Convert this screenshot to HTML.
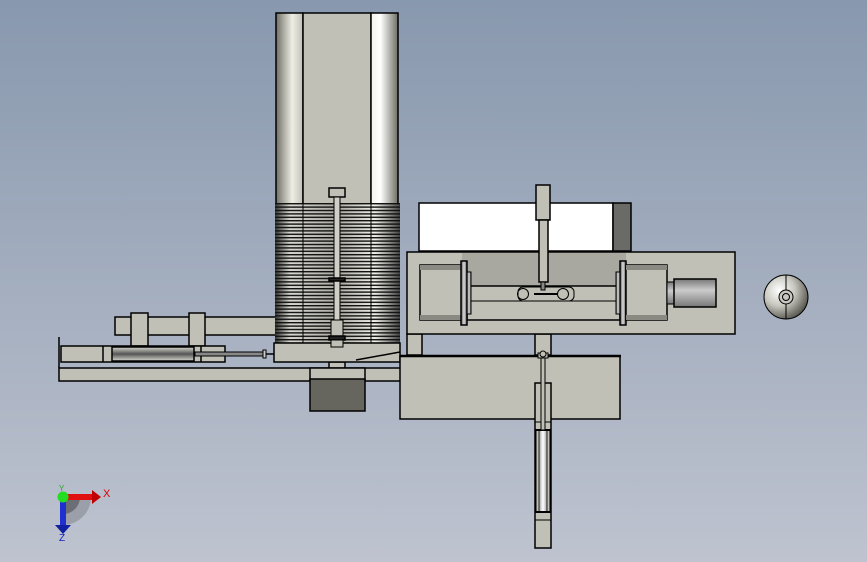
<!DOCTYPE html>
<html><head><meta charset="utf-8"><style>
html,body{margin:0;padding:0;width:867px;height:562px;overflow:hidden}
svg{display:block}
</style></head><body>
<svg width="867" height="562" viewBox="0 0 867 562" xmlns="http://www.w3.org/2000/svg">
<defs>
<linearGradient id="bg" x1="0" y1="0" x2="0" y2="1">
<stop offset="0" stop-color="#8898ae"/><stop offset="1" stop-color="#bec3cf"/></linearGradient>
<linearGradient id="cl" x1="0" x2="1"><stop offset="0" stop-color="#6f6f66"/><stop offset="0.6" stop-color="#eeeee4"/><stop offset="1" stop-color="#c0c0b6"/></linearGradient>
<linearGradient id="cr" x1="0" x2="1"><stop offset="0" stop-color="#f4f4ea"/><stop offset="0.35" stop-color="#ffffff"/><stop offset="1" stop-color="#6e6e64"/></linearGradient>
<linearGradient id="coil" x1="0" x2="1"><stop offset="0" stop-color="#333"/><stop offset="0.12" stop-color="#d8d8d0"/><stop offset="0.5" stop-color="#a8a8a0"/><stop offset="0.8" stop-color="#f0f0e8"/><stop offset="1" stop-color="#444"/></linearGradient>
<pattern id="lines" x="0" y="203" width="4" height="3.4" patternUnits="userSpaceOnUse"><rect width="4" height="1.4" fill="#111"/></pattern>
<linearGradient id="barrel" x1="0" y1="0" x2="0" y2="1"><stop offset="0" stop-color="#d8d8d0"/><stop offset="0.5" stop-color="#555"/><stop offset="1" stop-color="#d8d8d0"/></linearGradient>
<linearGradient id="vb" x1="0" x2="1"><stop offset="0" stop-color="#999"/><stop offset="0.3" stop-color="#ddd"/><stop offset="0.5" stop-color="#fff"/><stop offset="0.7" stop-color="#ddd"/><stop offset="1" stop-color="#999"/></linearGradient>
<linearGradient id="fl" x1="0" x2="1"><stop offset="0" stop-color="#555"/><stop offset="0.5" stop-color="#ddd"/><stop offset="1" stop-color="#555"/></linearGradient>
<linearGradient id="mt" x1="0" y1="0" x2="0" y2="1"><stop offset="0" stop-color="#777"/><stop offset="0.4" stop-color="#ccc"/><stop offset="1" stop-color="#777"/></linearGradient>
<radialGradient id="ball" cx="0.35" cy="0.35" r="0.7"><stop offset="0" stop-color="#fff"/><stop offset="0.5" stop-color="#c8c8c0"/><stop offset="1" stop-color="#55554e"/></radialGradient>
</defs>
<rect width="867" height="562" fill="url(#bg)"/>
<g stroke="#000" stroke-width="1.5">
<rect x="59" y="368" width="342" height="13" fill="#c0c0b6"/>
<line x1="59" y1="337" x2="59" y2="368"/>
<rect x="115" y="317" width="162" height="18" fill="#c0c0b6"/>
<rect x="131" y="313" width="17" height="33" fill="#c0c0b6"/>
<rect x="189" y="313" width="16" height="33" fill="#c0c0b6"/>
<rect x="61" y="346" width="164" height="16" fill="#c0c0b6"/>
<line x1="103" y1="346" x2="103" y2="362"/>
<rect x="112" y="347" width="82" height="14" fill="url(#barrel)"/>
<line x1="201" y1="346" x2="201" y2="362"/>
<rect x="195" y="352" width="68" height="4" fill="#888" stroke-width="1"/>
<rect x="263" y="350" width="3" height="8" fill="#ccc" stroke-width="1"/>
<line x1="266" y1="354" x2="278" y2="354"/>
<rect x="329" y="362" width="16" height="6" fill="#c0c0b6"/>
<rect x="310" y="368" width="55" height="12" fill="#c0c0b6"/>
<rect x="310" y="379" width="55" height="32" fill="#66665e"/>
<rect x="276" y="13" width="27" height="192" fill="url(#cl)"/>
<rect x="303" y="13" width="68" height="192" fill="#c0c0b6"/>
<rect x="371" y="13" width="27" height="192" fill="url(#cr)"/>
<rect x="275" y="203" width="125" height="140" fill="url(#coil)" stroke="none"/>
<rect x="275" y="203" width="125" height="140" fill="url(#lines)" stroke="none"/>
<line x1="303" y1="203" x2="303" y2="343" stroke-width="1"/>
<line x1="371" y1="203" x2="371" y2="343" stroke-width="1"/>
<rect x="274" y="343" width="126" height="19" fill="#c0c0b6"/>
<path d="M356 360 L400 352" fill="none"/>
<rect x="329" y="188" width="16" height="9" fill="#c0c0b6"/>
<rect x="334" y="197" width="6" height="140" fill="#d0d0c8" stroke-width="1"/>
<rect x="329" y="278" width="16" height="3" fill="#222"/>
<rect x="331" y="320" width="12" height="16" fill="#c0c0b6" stroke-width="1"/>
<rect x="329" y="336" width="16" height="4" fill="#222"/>
<rect x="331" y="340" width="12" height="7" fill="#c0c0b6" stroke-width="1"/>
<rect x="419" y="203" width="194" height="48" fill="#fff"/>
<rect x="613" y="203" width="18" height="48" fill="#6a6a66"/>
<rect x="407" y="334" width="15" height="21" fill="#c0c0b6"/>
<rect x="535" y="334" width="16" height="21" fill="#c0c0b6"/>
<rect x="407" y="252" width="328" height="82" fill="#c0c0b6"/>
<rect x="462" y="253" width="164" height="67" fill="#a8a8a0" stroke="none"/>
<rect x="467" y="286" width="153" height="34" fill="#c0c0b6"/>
<line x1="467" y1="301" x2="620" y2="301" stroke-width="1"/>
<rect x="420" y="265" width="42" height="55" fill="#c0c0b6"/>
<rect x="420" y="265" width="42" height="5" fill="#8a8a82" stroke="none"/>
<rect x="420" y="315" width="42" height="5" fill="#8a8a82" stroke="none"/>
<rect x="461" y="261" width="6" height="64" fill="url(#fl)"/>
<rect x="467" y="272" width="4" height="42" fill="url(#fl)" stroke-width="1"/>
<rect x="620" y="261" width="6" height="64" fill="url(#fl)"/>
<rect x="616" y="272" width="4" height="42" fill="url(#fl)" stroke-width="1"/>
<rect x="626" y="265" width="41" height="55" fill="#c0c0b6"/>
<rect x="626" y="265" width="41" height="5" fill="#8a8a82" stroke="none"/>
<rect x="626" y="315" width="41" height="5" fill="#8a8a82" stroke="none"/>
<rect x="667" y="282" width="7" height="22" fill="url(#mt)" stroke-width="1"/>
<rect x="674" y="279" width="42" height="28" fill="url(#mt)"/>
<rect x="518" y="287" width="56" height="14" rx="5" fill="#c0c0b6" stroke-width="1"/>
<line x1="534" y1="294" x2="558" y2="294" stroke-width="2"/>
<circle cx="523" cy="294" r="5.5" fill="none" stroke-width="1"/>
<circle cx="563" cy="294" r="5.5" fill="none" stroke-width="1"/>
<rect x="536" y="185" width="14" height="35" fill="#c0c0b6"/>
<rect x="539" y="220" width="9" height="62" fill="#c0c0b6"/>
<rect x="541" y="282" width="4" height="8" fill="#888" stroke-width="1"/>
<rect x="400" y="356" width="220" height="63" fill="#c0c0b6"/>
<line x1="400" y1="356" x2="621" y2="356" stroke-width="2.5"/>
<rect x="535" y="383" width="16" height="165" fill="#c0c0b6"/>
<line x1="535" y1="422" x2="551" y2="422" stroke-width="1"/>
<rect x="536" y="430" width="14" height="82" fill="#c0c0b6" stroke-width="1"/>
<rect x="539" y="430" width="8" height="82" fill="url(#vb)" stroke-width="0.8"/>
<line x1="535" y1="430" x2="551" y2="430" stroke-width="2"/>
<line x1="535" y1="512" x2="551" y2="512" stroke-width="2"/>
<line x1="535" y1="520" x2="551" y2="520" stroke-width="1"/>
<rect x="541" y="356" width="4" height="74" fill="#c0c0b6" stroke-width="1"/>
<rect x="538" y="353" width="10" height="5" fill="#c0c0b6" stroke-width="1"/>
<circle cx="543" cy="354" r="3" fill="#c0c0b6" stroke-width="1"/>
<circle cx="786" cy="297" r="22" fill="url(#ball)" stroke-width="1"/>
<line x1="786" y1="275" x2="786" y2="319" stroke-width="1"/>
<circle cx="786" cy="297" r="7" fill="#c8c8c0" stroke-width="1"/>
<circle cx="786" cy="297" r="3.5" fill="none" stroke-width="1"/>
</g>
<path d="M63 497 L63 525 A28 28 0 0 0 91 497 Z" fill="#8e929a" opacity="0.7"/>
<path d="M63 497 L63 514 A17 17 0 0 0 80 497 Z" fill="#5f6166" opacity="0.8"/>
<rect x="63" y="494" width="30" height="6" fill="#e01010"/>
<path d="M92 490 L101 497 L92 504 Z" fill="#c00000"/>
<rect x="60" y="497" width="6" height="28" fill="#2030d0"/>
<path d="M55 525 L71 525 L63 534 Z" fill="#1020a0"/>
<circle cx="63" cy="497" r="5.5" fill="#22dd22"/>
<text x="103" y="497" font-family="Liberation Sans, sans-serif" font-size="11" fill="#e00000">X</text>
<text x="59" y="541" font-family="Liberation Sans, sans-serif" font-size="10" fill="#1020c0">Z</text>
<text x="59" y="491" font-family="Liberation Sans, sans-serif" font-size="8" fill="#22aa22">Y</text>
</svg>
</body></html>
